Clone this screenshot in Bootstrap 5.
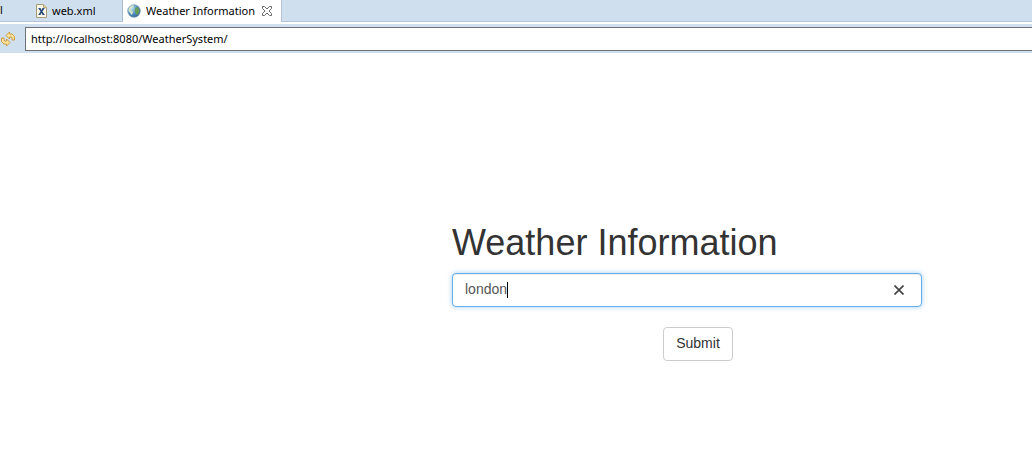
<!DOCTYPE html>
<html lang="en">
<head>
<meta charset="utf-8">
<meta name="viewport" content="width=device-width, initial-scale=1">
<title>Weather Information</title>
<link href="https://cdn.jsdelivr.net/npm/bootstrap@5.3.0/dist/css/bootstrap.min.css" rel="stylesheet">
<style>
  body { font-family: "Liberation Sans", Arial, sans-serif; font-size: 14px; line-height: 20px; color: #333; background: #fff; }
  .ide { font-family: "Noto Sans", "Open Sans", sans-serif; font-size: 11px; line-height: 20px; color: #000; }
  .tab-strip { height: 22px; background: #d0dfee; border-bottom: 1px solid #b4c3d8; }
  .tab-strip a { color: #000; }
  .tab-cut { width: 36px; }
  .tab-file { width: 87px; gap: 5px; border-right: 1px solid #a9b9d0; }
  .tab-page { width: 159px; height: 22px; padding-left: 4px; gap: 5px; background: #fff; border-right: 1px solid #b4c3d8; }
  .tab-close { width: 12px; height: 12px; line-height: 0; }
  .address-bar { height: 29px; margin-top: 2px; background: #d0dfee; }
  .refresh { width: 25px; }
  .address { height: 24px; padding: 0 5px; color: #000; border: 1px solid #6e7175; border-right: 0; outline: 0; background: #fff; }
  .weather { padding: 170px 24px 0 22px; }
  .weather h1 { font-size: 36px; line-height: 40px; font-weight: 400; margin-bottom: 10px; }
  .city, .city:focus { height: 34px; padding: 5px 12px 7px; font-size: 14px; line-height: 20px; color: #555; border: 1px solid #66afe9; border-radius: 4px; box-shadow: inset 0 1px 1px rgba(0,0,0,.075), 0 0 5px rgba(102,175,233,.6); }
  .caret { position: absolute; left: 55px; top: 9px; width: 1px; height: 16px; background: #000; }
  .clear { position: absolute; right: 18px; top: 12px; width: 10px; height: 10px; line-height: 0; }
  .actions { padding-left: 22px; }
  .submit { height: 34px; margin-top: 20px; padding: 5px 12px 7px; font-size: 14px; line-height: 20px; color: #333; border: 1px solid #ccc; border-radius: 4px; background: #fff; }
</style>
</head>
<body>
<header class="ide">
  <nav class="tab-strip d-flex" aria-label="Editors">
    <a href="#" class="tab-cut text-decoration-none">l</a>
    <a href="#" class="tab-file d-flex align-items-center text-decoration-none">
      <svg width="11" height="14" viewBox="0 0 11 14" aria-hidden="true"><path d="M.5.5h7l3 3v10H.5z" fill="#fcf9eb" stroke="#a99a76"/><path d="M7.500.5v3h3" fill="#e9d9a8" stroke="#bca976"/><path d="M3.500 4.500l4 6M7.500 4.500l-4 6" stroke="#254a78" stroke-width="1.600"/><path d="M2.500 4.500h2M6.500 4.500h2M2.500 10.500h2M6.500 10.500h2" stroke="#254a78"/></svg>
      <span>web.xml</span>
    </a>
    <div class="tab-page d-flex align-items-center">
      <svg width="14" height="14" viewBox="0 0 14 14" class="flex-shrink-0" aria-hidden="true"><defs><radialGradient id="sea" cx=".35" cy=".3" r=".8"><stop offset="0" stop-color="#b5dcf4"/><stop offset=".5" stop-color="#5795c5"/><stop offset="1" stop-color="#285b91"/></radialGradient></defs><circle cx="7" cy="7" r="6.300" fill="url(#sea)" stroke="#8299ad" stroke-width=".7"/><path d="M4 1.800l3-.6-.5 2-1.800 1-1 2L5.500 7l.5 2-1.500 2L3 8.500 1.300 7 2 4z" fill="#d3e5c4"/><path d="M8.500 3.500l2-.5 1.500 2 .3 3-1.800 2.500-1.500.3-.5-2.300L7.500 6.500z" fill="#699c55"/></svg>
      <a href="#" class="text-decoration-none text-nowrap">Weather Information</a>
      <button type="button" class="tab-close btn p-0 border-0 rounded-0 ms-auto me-2" aria-label="Close tab"><svg width="12" height="12" viewBox="0 0 12 12"><path d="M1.500 1.500h2l2.500 2.500 2.500-2.500h2v2L8 6l2.500 2.500v2h-2L6 8l-2.500 2.500h-2v-2L4 6 1.500 3.500z" fill="#fff" stroke="#696969"/></svg></button>
    </div>
  </nav>
  <div class="address-bar d-flex align-items-center">
    <button type="button" class="refresh btn p-0 border-0 rounded-0 text-start lh-1" aria-label="Refresh"><svg width="16" height="16" viewBox="0 0 16 16"><g fill="#fbe29a" stroke="#cb963a" stroke-width=".9" stroke-linejoin="round"><path d="M6 4.500L9.500 1v2h2.500l2.500 2.500V9H12V6.500L11 6H9.500v2z"/><path d="M10 11.500L6.500 15v-2H4l-2.500-2.500V7H4v2.500l1 .5h1.500V8z"/></g></svg></button>
    <input type="text" class="address flex-grow-1 rounded-0" value="http://localhost:8080/WeatherSystem/" aria-label="Address">
  </div>
</header>
<main class="row g-0">
  <form class="weather col-6 offset-5">
    <h1><label for="city">Weather Information</label></h1>
    <div class="position-relative">
      <input type="text" id="city" class="city form-control" value="london">
      <span class="caret"></span>
      <button type="button" class="clear btn p-0 border-0" aria-label="Clear"><svg width="10" height="10" viewBox="0 0 10 10"><path d="M.5.5l9 9M9.500.5l-9 9" stroke="#444" stroke-width="1.700"/></svg></button>
    </div>
    <div class="actions text-center">
      <button type="button" class="submit btn">Submit</button>
    </div>
  </form>
</main>
<script src="https://cdn.jsdelivr.net/npm/bootstrap@5.3.0/dist/js/bootstrap.bundle.min.js"></script>
</body>
</html>
